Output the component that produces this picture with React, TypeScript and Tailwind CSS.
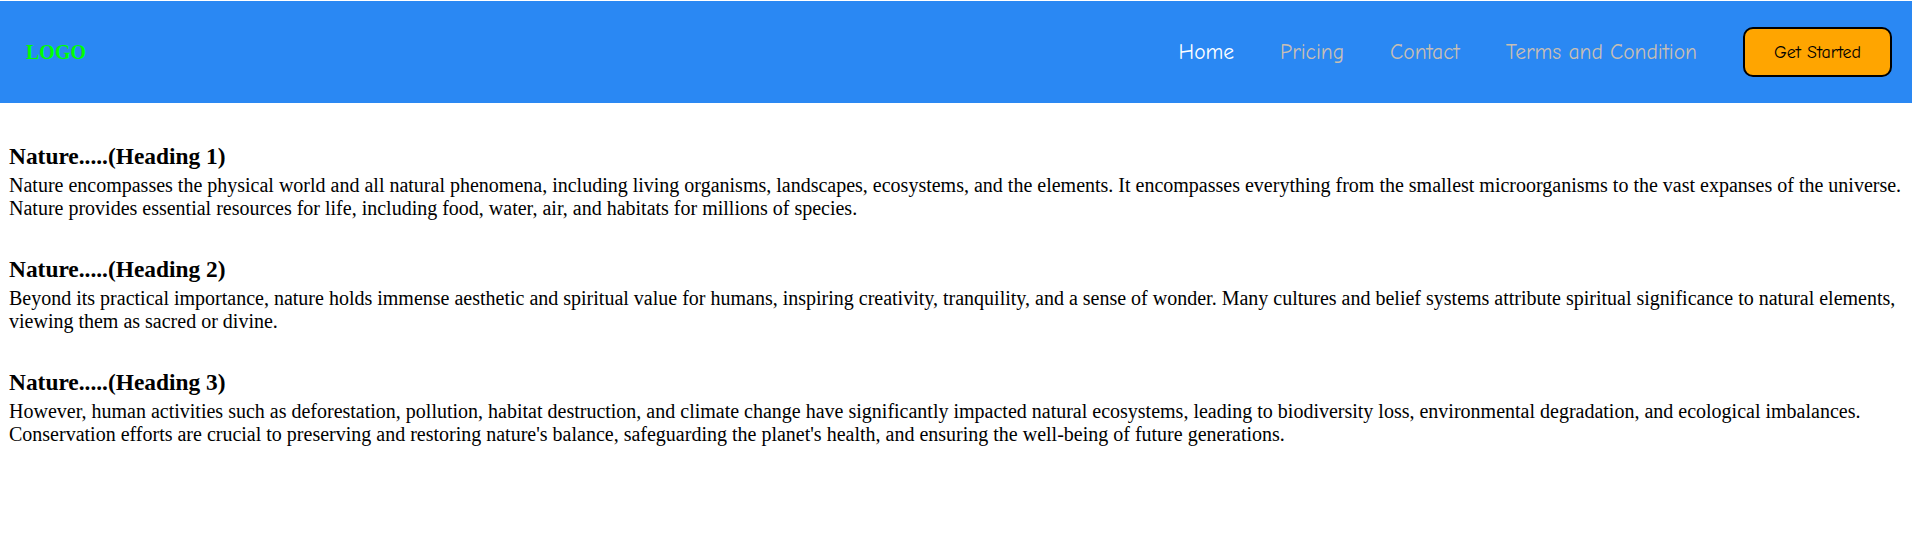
import React from "react";

const sections = [
  {
    title: "Nature.....(Heading 1)",
    body: "Nature encompasses the physical world and all natural phenomena, including living organisms, landscapes, ecosystems, and the elements. It encompasses everything from the smallest microorganisms to the vast expanses of the universe. Nature provides essential resources for life, including food, water, air, and habitats for millions of species.",
  },
  {
    title: "Nature.....(Heading 2)",
    body: "Beyond its practical importance, nature holds immense aesthetic and spiritual value for humans, inspiring creativity, tranquility, and a sense of wonder. Many cultures and belief systems attribute spiritual significance to natural elements, viewing them as sacred or divine.",
  },
  {
    title: "Nature.....(Heading 3)",
    body: "However, human activities such as deforestation, pollution, habitat destruction, and climate change have significantly impacted natural ecosystems, leading to biodiversity loss, environmental degradation, and ecological imbalances. Conservation efforts are crucial to preserving and restoring nature's balance, safeguarding the planet's health, and ensuring the well-being of future generations.",
  },
];

export default function App() {
  const comic = { fontFamily: '"Comic Sans MS", "Comic Neue", cursive' };
  return (
    <div className="min-h-[553px] bg-white pt-[1px]" style={{ fontFamily: '"Liberation Serif", "Times New Roman", serif' }}>
      <header className="mr-[4px] flex h-[102px] items-center justify-between bg-[#2a88f3] pl-[26px] pr-[20px]">
        <div className="text-[20px] font-bold text-[#00ff00]">LOGO</div>
        <nav className="flex items-center gap-[46px] text-[21.5px]" style={comic}>
          <a className="text-white">Home</a>
          <a className="text-[#c8bfb4]">Pricing</a>
          <a className="text-[#c8bfb4]">Contact</a>
          <a className="text-[#c8bfb4]">Terms and Condition</a>
          <button
            className="flex h-[50px] w-[149px] items-center justify-center rounded-[10px] border-2 border-black bg-[#ffa500] text-[18px] text-black"
            style={comic}
          >
            Get Started
          </button>
        </nav>
      </header>
      <main className="pl-[9px] pr-[10px] pt-[40px] text-black">
        {sections.map((s, i) => (
          <section key={i} className={i > 0 ? "mt-[36px]" : ""}>
            <h3 className="text-[23.4px] font-bold leading-[27px]">{s.title}</h3>
            <p className="mt-[4px] text-[20px] leading-[23px]">{s.body}</p>
          </section>
        ))}
      </main>
    </div>
  );
}
